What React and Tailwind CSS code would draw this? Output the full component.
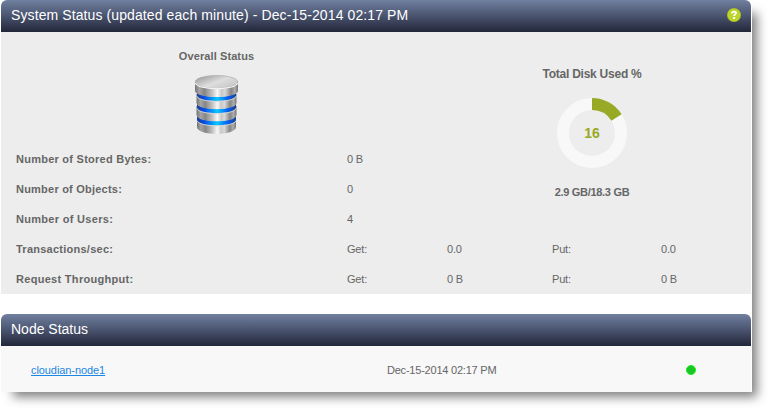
import React from "react";

function Header({ title, children }) {
  return (
    <div className="flex h-8 items-center justify-between rounded-t-[6px] bg-linear-to-b from-[#70809f] via-[#4a546f] to-[#22273a] pr-[10px] pl-[10px] text-[14px] leading-4 text-white">
      {title}
      {children}
    </div>
  );
}

function HelpIcon() {
  return (
    <svg className="mb-[2px] h-[14px] w-[14px]" viewBox="0 0 14 14">
      <circle cx="7" cy="7" r="7" fill="#a3b923" />
      <circle cx="7" cy="7" r="6.3" fill="#bdd52a" />
      <path d="M4.9 5.6C4.9 4 5.9 3.6 7 3.6c1.2 0 2 .6 2 1.5 0 1.3-1.9 1.3-1.9 3" fill="none" stroke="#fff" strokeWidth="1.9" />
      <rect x="6.1" y="9" width="2" height="1.9" fill="#fff" />
    </svg>
  );
}

function BlueRing({ y }) {
  return (
    <g transform={`translate(0 ${y})`}>
      <path d="M2 -2.5C3 5 40 5 41 -2.5V2C39 8.9 4 8.9 2 2z" fill="url(#blue)" />
      <path d="M2 2.4C4 9.3 39 9.3 41 2.4" fill="none" stroke="#d8d8d8" strokeWidth=".9" />
    </g>
  );
}

function Database() {
  return (
    <svg className="mt-[12px] h-[60px] w-[43px]" viewBox="0 0 43 60">
      <defs>
        <linearGradient id="metal">
          <stop offset="0" stopColor="#747474" />
          <stop offset=".1" stopColor="#a4a4a4" />
          <stop offset=".22" stopColor="#868686" />
          <stop offset=".4" stopColor="#c4c4c4" />
          <stop offset=".52" stopColor="#f8f8f8" />
          <stop offset=".62" stopColor="#c8c8c8" />
          <stop offset=".7" stopColor="#d8d8d8" />
          <stop offset=".84" stopColor="#858585" />
          <stop offset=".93" stopColor="#adadad" />
          <stop offset="1" stopColor="#747474" />
        </linearGradient>
        <linearGradient id="blue">
          <stop offset="0" stopColor="#1a3f94" />
          <stop offset=".2" stopColor="#0550ee" />
          <stop offset=".52" stopColor="#08c8ff" />
          <stop offset=".78" stopColor="#0560f8" />
          <stop offset="1" stopColor="#1a3f94" />
        </linearGradient>
        <linearGradient id="lid" x1="0" y1="0" x2="1" y2=".8">
          <stop offset="0" stopColor="#929292" />
          <stop offset=".55" stopColor="#dedede" />
          <stop offset="1" stopColor="#c4c4c4" />
        </linearGradient>
      </defs>
      <path d="M2 42v10C2.5 61.3 40.5 61.3 41 52V42z" fill="url(#metal)" />
      <BlueRing y={43.2} />
      <path d="M1.5 31v9C3.5 48 39.5 48 41.5 40V31z" fill="url(#metal)" />
      <BlueRing y={31} />
      <path d="M1.5 19v9C3.5 36 39.5 36 41.5 28V19z" fill="url(#metal)" />
      <BlueRing y={18.8} />
      <path d="M0 7v9C1.5 24 41.5 24 43 16V7z" fill="url(#metal)" />
      <ellipse cx="21.5" cy="7" rx="21.2" ry="6.6" fill="url(#lid)" stroke="#a2a2a2" strokeWidth=".6" />
      <path d="M.5 8C2 15.6 41 15.6 42.5 8" fill="none" stroke="#f7f7f7" strokeWidth="1.1" />
    </svg>
  );
}

function Donut() {
  return (
    <svg className="mt-[16px] h-[70px] w-[70px]" viewBox="0 0 70 70">
      <circle cx="35" cy="35" r="29" fill="none" stroke="#f8f8f8" strokeWidth="12" />
      <path d="M35 0A35 35 0 0 1 64.55 16.25L54.42 22.68A23 23 0 0 0 35 12z" fill="#97a925" />
      <text x="35" y="40" textAnchor="middle" fontSize="14" fontWeight="bold" fill="#97a925">16</text>
    </svg>
  );
}

const Label = ({ children, className }) => (
  <div className={`col-start-1 font-bold ${className}`}>{children}</div>
);

export default function App() {
  return (
    <div className="h-[408px] w-[768px] overflow-hidden bg-white font-['Liberation_Sans',Arial,sans-serif] text-[11px] leading-[14px] text-[#666]">
      <main className="h-[392px] w-[752px] bg-white px-px shadow-[9px_9px_10px_-4px_rgba(0,0,0,0.5)]">
        <section>
          <Header
            title={
              <h2 className="pb-[2px] tracking-[0.1px] whitespace-nowrap">
                System Status (updated each minute) - Dec-15-2014 02:17 PM
              </h2>
            }
          >
            <HelpIcon />
          </Header>
          <div className="grid h-[262px] grid-cols-[331px_100px_105px_109px_90px] grid-rows-[112px_repeat(5,30px)] items-center bg-[#ededed] pl-[15px] whitespace-nowrap">
            <div className="col-span-2 col-start-1 row-start-1 flex w-[401px] flex-col items-center self-start pt-[17px]">
              <h3 className="font-bold tracking-[0.1px]">Overall Status</h3>
              <Database />
            </div>
            <div className="col-span-3 col-start-3 row-span-3 row-start-1 flex w-[290px] flex-col items-center self-start pt-[35px]">
              <h3 className="text-[12px] leading-[15px] font-bold tracking-[-0.24px]">Total Disk Used %</h3>
              <Donut />
              <p className="mt-[17px] font-bold tracking-[-0.3px]">2.9 GB/18.3 GB</p>
            </div>
            <Label className="row-start-2 tracking-[0.25px]">Number of Stored Bytes:</Label>
            <div className="col-start-2 row-start-2 tracking-[-0.2px]">0 B</div>
            <Label className="row-start-3 tracking-[0.22px]">Number of Objects:</Label>
            <div className="col-start-2 row-start-3">0</div>
            <Label className="row-start-4 tracking-[0.3px]">Number of Users:</Label>
            <div className="col-start-2 row-start-4">4</div>
            <Label className="row-start-5 tracking-[0.25px]">Transactions/sec:</Label>
            <div className="row-start-5 tracking-[-0.2px]">Get:</div>
            <div className="row-start-5 tracking-[-0.2px]">0.0</div>
            <div className="row-start-5 tracking-[-0.2px]">Put:</div>
            <div className="row-start-5 tracking-[-0.2px]">0.0</div>
            <Label className="row-start-6 tracking-[0.3px]">Request Throughput:</Label>
            <div className="row-start-6 tracking-[-0.2px]">Get:</div>
            <div className="row-start-6 tracking-[-0.2px]">0 B</div>
            <div className="row-start-6 tracking-[-0.2px]">Put:</div>
            <div className="row-start-6 tracking-[-0.2px]">0 B</div>
          </div>
        </section>
        <section className="mt-5">
          <Header title={<h2 className="pb-[2px]">Node Status</h2>} />
          <div className="grid h-[46px] grid-cols-[356px_299px_1fr] items-center bg-[#f8f8f8] pt-[2px] pl-[30px]">
            <div><a href="#node" className="tracking-[-0.08px] text-[#1c86e3] underline">cloudian-node1</a></div>
            <div className="tracking-[-0.22px]">Dec-15-2014 02:17 PM</div>
            <span className="h-[10px] w-[10px] rounded-full border border-[#16ee16] bg-[#1cc527]" />
          </div>
        </section>
      </main>
    </div>
  );
}
